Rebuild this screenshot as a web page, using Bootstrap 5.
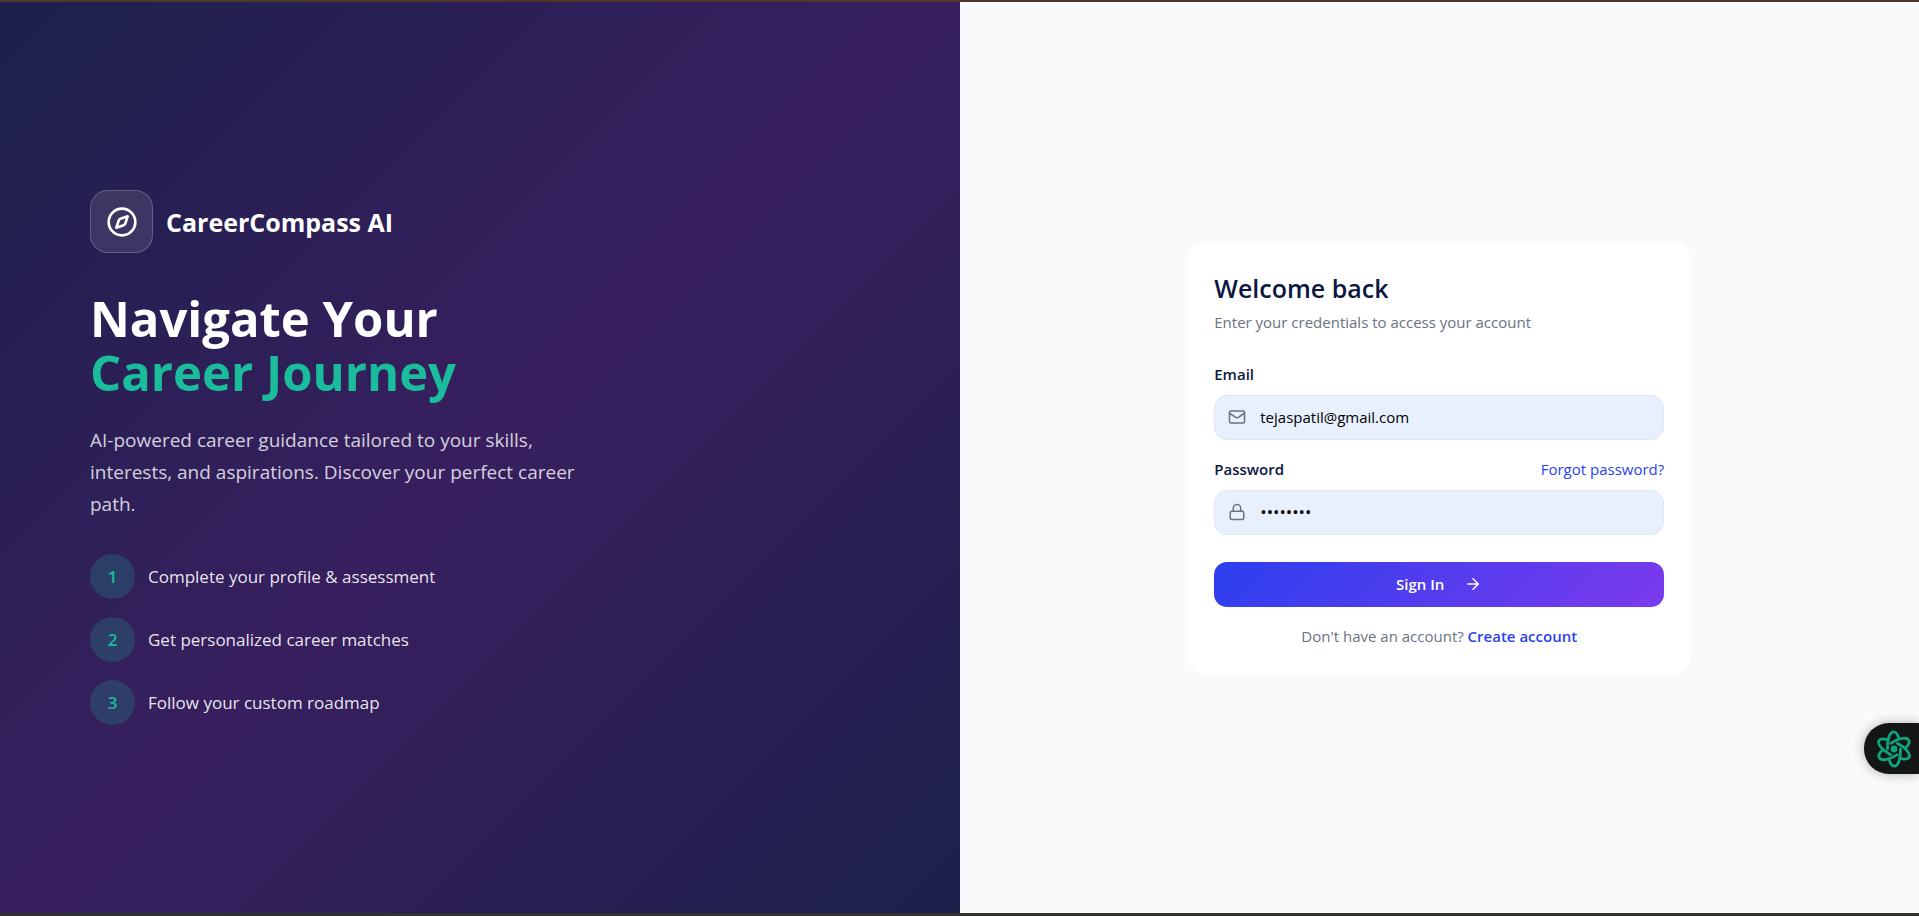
<!DOCTYPE html>
<html lang="en">
<head>
<meta charset="utf-8">
<meta name="viewport" content="width=device-width, initial-scale=1">
<title>CareerCompass AI - Sign In</title>
<link href="https://cdn.jsdelivr.net/npm/bootstrap@5.3.0/dist/css/bootstrap.min.css" rel="stylesheet">
<style>
  :root { --teal: #1abc9c; --blue: #2b3fee; --ink: #0b1741; --muted: #6b7280; }
  body { font-family: "Open Sans", "Noto Sans", sans-serif; font-size: 15px; line-height: 22px; color: var(--ink); background: #f9fafc; }
  .page { border-top: 2px solid #50372c; border-bottom: 3px solid #32322f; }
  .hero { background: linear-gradient(135deg, #1c204b 0%, #381f5f 50%, #1c204b 100%); padding: 36px 90px; }
  .logo-tile { width: 63px; height: 63px; border-radius: 18px; background: rgba(255,255,255,.1); border: 1px solid rgba(255,255,255,.2); }
  .brand-name { font-size: 25px; line-height: 36px; }
  .headline { font-size: 49px; line-height: 54px; margin: 38px 0 25px; }
  .teal-text { color: var(--teal); }
  .intro { font-size: 19px; line-height: 32px; max-width: 504px; color: rgba(255,255,255,.8); margin-bottom: 34px; }
  .steps { gap: 18px; font-size: 17px; color: rgba(255,255,255,.9); }
  .step-num { width: 45px; height: 45px; background: rgba(26,188,156,.2); color: var(--teal); }
  .gap-logo { gap: 13px; }
  .login-card { width: 100%; max-width: 504px; border: 0; border-radius: 18px; padding: 27px; }
  .login-card h2 { font-size: 25px; line-height: 38px; margin: 0 0 4px; color: var(--ink); }
  .muted-text { color: var(--muted); }
  .subtitle { margin-bottom: 30px; }
  .field { height: 45px; border: 1px solid #e1e5ec; border-radius: 13px; background: #e8f0fe; padding: 0 13px; gap: 14px; color: var(--muted); }
  .field input { background: transparent; border: 0; outline: 0; color: #000; padding: 0; min-width: 0; }
  .field input[type=password] { font-size: 17px; }
  .email-field { margin-bottom: 18px; }
  .field-label { margin-bottom: 10px; }
  .link-blue { color: var(--blue); text-decoration: none; }
  .sign-btn { height: 45px; border: 0; border-radius: 13px; gap: 20px; font-size: 15px; color: #fff; background: linear-gradient(135deg, #2b3fee, #7c3aed); margin: 27px 0 18px; }
  .side-tab { right: 0; top: 723px; width: 55px; height: 51px; border: 0; border-radius: 25px 0 0 25px; background: #141615; box-shadow: 0 0 12px rgba(0,0,0,.3); padding: 0 7px 0 12px; }
</style>
</head>
<body>
<main class="page d-flex min-vh-100">
  <section class="hero w-50 d-flex flex-column justify-content-center text-white">
    <div class="d-flex align-items-center gap-logo">
      <div class="logo-tile d-flex align-items-center justify-content-center">
        <svg width="32" height="32" viewBox="0 0 24 24" fill="none" stroke="#fff" stroke-width="2" stroke-linecap="round" stroke-linejoin="round" aria-hidden="true"><circle cx="12" cy="12" r="10"/><path d="m16.24 7.76-1.8 5.41a2 2 0 0 1-1.27 1.27l-5.41 1.8 1.8-5.41a2 2 0 0 1 1.27-1.27z"/></svg>
      </div>
      <span class="brand-name fw-bold">CareerCompass AI</span>
    </div>
    <h1 class="headline fw-bold"><span class="d-block">Navigate Your</span><span class="d-block teal-text">Career Journey</span></h1>
    <p class="intro">AI-powered career guidance tailored to your skills, interests, and aspirations. Discover your perfect career path.</p>
    <ol class="steps list-unstyled d-flex flex-column mb-0">
      <li class="d-flex align-items-center gap-logo"><span class="step-num rounded-circle d-flex align-items-center justify-content-center fw-semibold">1</span>Complete your profile &amp; assessment</li>
      <li class="d-flex align-items-center gap-logo"><span class="step-num rounded-circle d-flex align-items-center justify-content-center fw-semibold">2</span>Get personalized career matches</li>
      <li class="d-flex align-items-center gap-logo"><span class="step-num rounded-circle d-flex align-items-center justify-content-center fw-semibold">3</span>Follow your custom roadmap</li>
    </ol>
  </section>
  <section class="w-50 d-flex align-items-center justify-content-center">
    <form class="login-card card">
      <h2 class="fw-semibold">Welcome back</h2>
      <p class="subtitle muted-text">Enter your credentials to access your account</p>
      <label for="email" class="field-label fw-semibold">Email</label>
      <div class="field email-field d-flex align-items-center">
        <svg width="18" height="18" viewBox="0 0 24 24" fill="none" stroke="currentColor" stroke-width="2" stroke-linecap="round" stroke-linejoin="round" aria-hidden="true"><rect x="2" y="4" width="20" height="16" rx="2"/><path d="m22 7-8.97 5.7a1.94 1.94 0 0 1-2.06 0L2 7"/></svg>
        <input id="email" type="email" class="flex-grow-1" value="tejaspatil@gmail.com">
      </div>
      <div class="field-label d-flex justify-content-between">
        <label for="password" class="fw-semibold">Password</label>
        <a href="#" class="link-blue">Forgot password?</a>
      </div>
      <div class="field d-flex align-items-center">
        <svg width="18" height="18" viewBox="0 0 24 24" fill="none" stroke="currentColor" stroke-width="2" stroke-linecap="round" stroke-linejoin="round" aria-hidden="true"><rect x="3" y="11" width="18" height="11" rx="2"/><path d="M7 11V7a5 5 0 0 1 10 0v4"/></svg>
        <input id="password" type="password" class="flex-grow-1" value="password">
      </div>
      <button type="submit" class="sign-btn btn d-flex align-items-center justify-content-center fw-semibold">Sign In
        <svg width="18" height="18" viewBox="0 0 24 24" fill="none" stroke="currentColor" stroke-width="2" stroke-linecap="round" stroke-linejoin="round" aria-hidden="true"><path d="M5 12h14M12 5l7 7-7 7"/></svg>
      </button>
      <p class="muted-text text-center mb-0">Don't have an account? <a href="#" class="link-blue fw-semibold">Create account</a></p>
    </form>
  </section>
</main>
<button type="button" class="side-tab position-fixed d-flex align-items-center" aria-label="Open assistant">
  <svg width="36" height="38" viewBox="0 0 36 38" fill="none" stroke="#10a37f" stroke-width="2.8" stroke-linecap="round" aria-hidden="true">
    <circle cx="18" cy="19" r="3.4" fill="#10a37f" stroke="none"/>
    <g id="orbit"><path d="M11.500 19C11 9 14 1.800 17.500 1.800c2.500 0 4.500 3 5.500 7M24.500 19c.5 10-2.500 17.200-6 17.200-2.500 0-4.500-3-5.500-7"/></g>
    <use href="#orbit" transform="rotate(60 18 19)"/>
    <use href="#orbit" transform="rotate(120 18 19)"/>
  </svg>
</button>
<script src="https://cdn.jsdelivr.net/npm/bootstrap@5.3.0/dist/js/bootstrap.bundle.min.js"></script>
</body>
</html>
